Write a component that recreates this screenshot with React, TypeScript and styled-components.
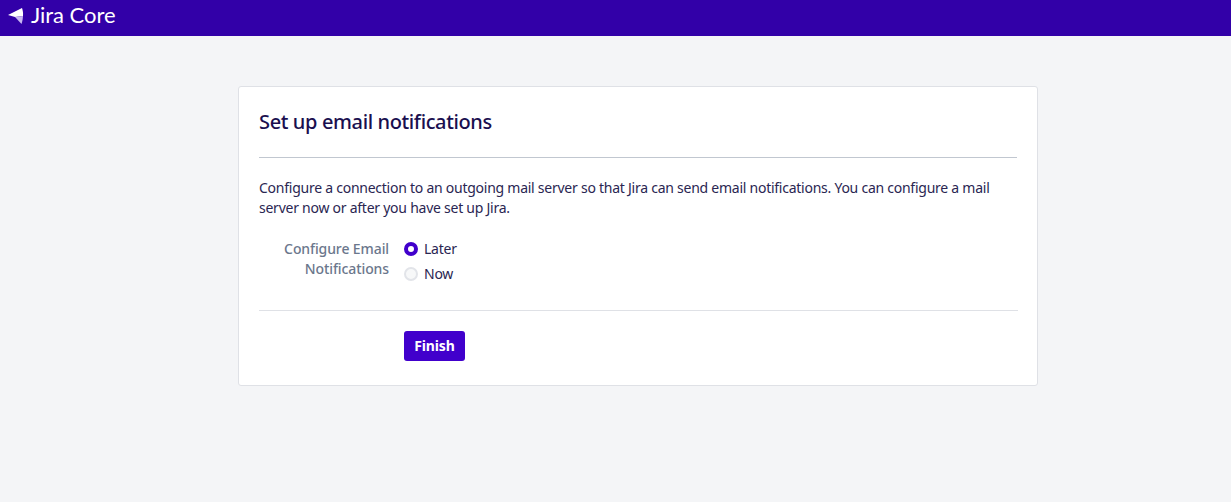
import React from "react";
import styled, { createGlobalStyle } from "styled-components";

const GlobalStyle = createGlobalStyle`
  html, body {
    margin: 0;
    padding: 0;
    min-height: 100%;
    background: #f4f5f7;
  }

  body {
    font-family: "Noto Sans", "Open Sans", sans-serif;
    font-size: 14px;
    line-height: 20px;
    letter-spacing: -0.25px;
    color: #172b4d;
  }
`;

const Page = styled.div`
  min-height: 502px;
  display: flex;
  flex-direction: column;
  background: #f4f5f7;
`;

const Header = styled.header`
  height: 36px;
  flex-shrink: 0;
  display: flex;
  align-items: center;
  gap: 7px;
  padding-left: 8px;
  background: #3200a8;
`;

const LogoMark = styled.svg`
  margin-bottom: 4px;
`;

const LogoText = styled.span`
  margin-bottom: 6px;
  font-family: "Lato", sans-serif;
  font-size: 22px;
  font-weight: 400;
  line-height: 30px;
  letter-spacing: -0.05px;
  color: #ffffff;
`;

const Main = styled.main`
  display: flex;
  justify-content: center;
  padding: 50px 0 0 45px;
`;

const Card = styled.section`
  box-sizing: border-box;
  width: 800px;
  height: 300px;
  padding: 20px 20px 0;
  background: #ffffff;
  border: 1px solid #dfe1e6;
  border-radius: 3px;
`;

const Title = styled.h1`
  margin: 0;
  height: 50px;
  border-bottom: 1px solid #c1c7d0;
  font-size: 20px;
  font-weight: 500;
  line-height: 30px;
  letter-spacing: -0.37px;
  color: #1a0f4f;
`;

const Intro = styled.p`
  margin: 20px 0 0;
  font-size: 14px;
  line-height: 20px;
  color: #2a2652;
`;

const Field = styled.div`
  display: grid;
  grid-template-columns: 130px 1fr;
  column-gap: 15px;
  margin: 21px -1px 0 0;
  padding-bottom: 26px;
  border-bottom: 1px solid #dfe1e6;
`;

const FieldLabel = styled.div`
  text-align: right;
  font-weight: 500;
  letter-spacing: -0.1px;
  color: #6b778c;
`;

const Options = styled.div`
  display: flex;
  flex-direction: column;
  gap: 5px;
`;

const Option = styled.label`
  display: flex;
  align-items: center;
  gap: 6px;
  height: 20px;
  color: #2a2652;
`;

const Radio = styled.span<{ $checked?: boolean }>`
  box-sizing: border-box;
  width: 14px;
  height: 14px;
  border-radius: 50%;
  background: ${({ $checked }) => ($checked ? "#ffffff" : "#f7f8f9")};
  border: ${({ $checked }) => ($checked ? "4px solid #4100cc" : "2px solid #e2e4e9")};
`;

const Actions = styled.div`
  padding: 20px 0 0 145px;
`;

const FinishButton = styled.button`
  width: 61px;
  height: 30px;
  padding: 0 0 2px;
  border: 0;
  border-radius: 3px;
  background: #4100cc;
  color: #ffffff;
  font-family: inherit;
  font-size: 14px;
  font-weight: 700;
  letter-spacing: -0.15px;
`;

const Logo = () => (
  <LogoMark width="16" height="18" viewBox="0 0 16 18" aria-hidden="true">
    <path d="M0 8 14 1c.9 2.6 1.2 5.3 1 8l-8 1z" fill="#ffffff" />
    <path d="M7 10 15 9c-.2 2.9-.6 5.5-1.5 8z" fill="#c9b8f2" />
  </LogoMark>
);

export default function App() {
  return (
    <Page>
      <GlobalStyle />
      <Header>
        <Logo />
        <LogoText>Jira Core</LogoText>
      </Header>
      <Main>
        <Card>
          <Title>Set up email notifications</Title>
          <Intro>
            Configure a connection to an outgoing mail server so that Jira can send email
            notifications. You can configure a mail server now or after you have set up Jira.
          </Intro>
          <Field>
            <FieldLabel>Configure Email Notifications</FieldLabel>
            <Options>
              <Option>
                <Radio $checked />
                Later
              </Option>
              <Option>
                <Radio />
                Now
              </Option>
            </Options>
          </Field>
          <Actions>
            <FinishButton>Finish</FinishButton>
          </Actions>
        </Card>
      </Main>
    </Page>
  );
}
